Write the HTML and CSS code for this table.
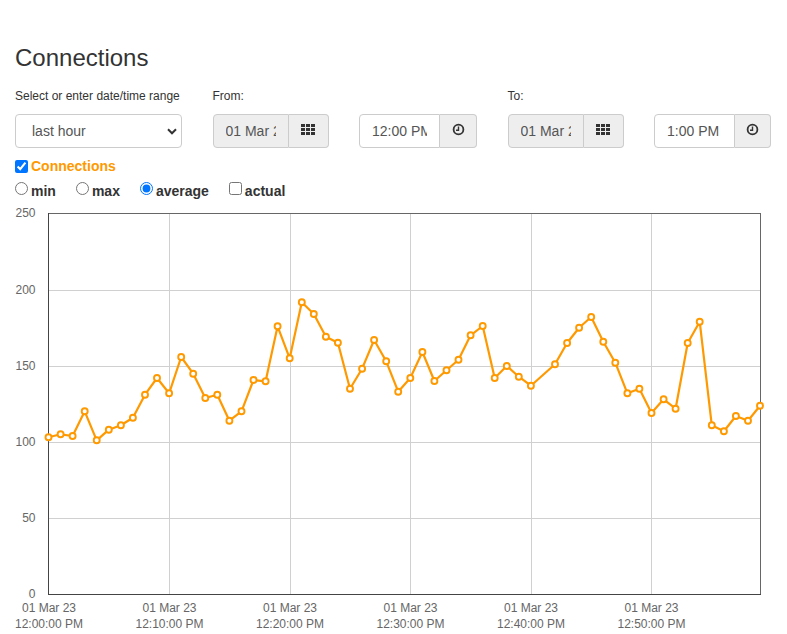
FILE: index.html
```html
<!DOCTYPE html>
<html lang="en">
<head>
<meta charset="utf-8">
<title>Connections</title>
<link rel="stylesheet" href="styles.css">
</head>
<body>
<div class="page">
  <h1 class="title">Connections</h1>
  <div class="controls">
    <div class="field field-range">
      <label class="field-label">Select or enter date/time range</label>
      <div class="select">
        <span>last hour</span>
        <svg class="chevron" width="10" height="7" viewBox="0 0 10 7"><path d="M1 1.3 L5 5.3 L9 1.3" fill="none" stroke="#333" stroke-width="2"/></svg>
      </div>
    </div>
    <div class="field field-date">
      <label class="field-label">From:</label>
      <div class="group">
        <input class="input input-date" value="01 Mar 2023" readonly>
        <span class="addon addon-date">
          <svg width="14" height="11" viewBox="0 0 14 11" fill="#333"><rect x="0" y="0" width="4" height="3"/><rect x="5" y="0" width="4" height="3"/><rect x="10" y="0" width="4" height="3"/><rect x="0" y="4" width="4" height="3"/><rect x="5" y="4" width="4" height="3"/><rect x="10" y="4" width="4" height="3"/><rect x="0" y="8" width="4" height="3"/><rect x="5" y="8" width="4" height="3"/><rect x="10" y="8" width="4" height="3"/></svg>
        </span>
      </div>
    </div>
    <div class="field field-time">
      <label class="field-label">&nbsp;</label>
      <div class="group">
        <input class="input input-time" value="12:00 PM">
        <span class="addon addon-time">
          <svg width="13" height="13" viewBox="0 0 13 13"><circle cx="6.5" cy="6.5" r="4.9" fill="none" stroke="#333" stroke-width="1.8"/><path d="M6.5 3.6 V7.3 H4" fill="none" stroke="#333" stroke-width="1.4"/></svg>
        </span>
      </div>
    </div>
    <div class="field field-date">
      <label class="field-label">To:</label>
      <div class="group">
        <input class="input input-date" value="01 Mar 2023" readonly>
        <span class="addon addon-date">
          <svg width="14" height="11" viewBox="0 0 14 11" fill="#333"><rect x="0" y="0" width="4" height="3"/><rect x="5" y="0" width="4" height="3"/><rect x="10" y="0" width="4" height="3"/><rect x="0" y="4" width="4" height="3"/><rect x="5" y="4" width="4" height="3"/><rect x="10" y="4" width="4" height="3"/><rect x="0" y="8" width="4" height="3"/><rect x="5" y="8" width="4" height="3"/><rect x="10" y="8" width="4" height="3"/></svg>
        </span>
      </div>
    </div>
    <div class="field field-time field-time-end">
      <label class="field-label">&nbsp;</label>
      <div class="group">
        <input class="input input-time" value="1:00 PM">
        <span class="addon addon-time">
          <svg width="13" height="13" viewBox="0 0 13 13"><circle cx="6.5" cy="6.5" r="4.9" fill="none" stroke="#333" stroke-width="1.8"/><path d="M6.5 3.6 V7.3 H4" fill="none" stroke="#333" stroke-width="1.4"/></svg>
        </span>
      </div>
    </div>
  </div>
  <div class="series">
    <label class="series-item"><input class="series-check" type="checkbox" checked><span class="series-name">Connections</span></label>
  </div>
  <div class="modes">
    <label class="mode"><input class="mode-input" type="radio" name="mode"><span>min</span></label>
    <label class="mode"><input class="mode-input" type="radio" name="mode"><span>max</span></label>
    <label class="mode"><input class="mode-input" type="radio" name="mode" checked><span>average</span></label>
    <label class="mode"><input class="mode-input" type="checkbox"><span>actual</span></label>
  </div>
</div>
<svg class="chart" width="787" height="430" viewBox="0 204 787 430">
  <g class="grid" stroke="#d0d0d0" stroke-width="1" fill="none">
    <line x1="48.5" y1="290.5" x2="760.5" y2="290.5"/>
    <line x1="48.5" y1="366.5" x2="760.5" y2="366.5"/>
    <line x1="48.5" y1="442.5" x2="760.5" y2="442.5"/>
    <line x1="48.5" y1="518.5" x2="760.5" y2="518.5"/>
    <line x1="169.5" y1="213.5" x2="169.5" y2="594.5"/>
    <line x1="290.5" y1="213.5" x2="290.5" y2="594.5"/>
    <line x1="410.5" y1="213.5" x2="410.5" y2="594.5"/>
    <line x1="531.5" y1="213.5" x2="531.5" y2="594.5"/>
    <line x1="651.5" y1="213.5" x2="651.5" y2="594.5"/>
  </g>
  <rect x="48.5" y="213.5" width="712" height="381" fill="none" stroke="#666" stroke-width="1"/>
  <line x1="48.5" y1="213" x2="48.5" y2="595" stroke="#444"/>
  <line x1="48" y1="594.5" x2="761" y2="594.5" stroke="#444"/>
  <g class="axis-label" text-anchor="end">
    <text x="35.5" y="217.3">250</text>
    <text x="35.5" y="293.9">200</text>
    <text x="35.5" y="369.8">150</text>
    <text x="35.5" y="445.9">100</text>
    <text x="35.5" y="521.9">50</text>
    <text x="35.5" y="598">0</text>
  </g>
  <g class="axis-label" text-anchor="middle">
    <text x="49" y="611.5">01 Mar 23</text><text x="49" y="628">12:00:00 PM</text>
    <text x="169.5" y="611.5">01 Mar 23</text><text x="169.5" y="628">12:10:00 PM</text>
    <text x="290" y="611.5">01 Mar 23</text><text x="290" y="628">12:20:00 PM</text>
    <text x="410.5" y="611.5">01 Mar 23</text><text x="410.5" y="628">12:30:00 PM</text>
    <text x="531" y="611.5">01 Mar 23</text><text x="531" y="628">12:40:00 PM</text>
    <text x="651.5" y="611.5">01 Mar 23</text><text x="651.5" y="628">12:50:00 PM</text>
  </g>
  <polyline class="series-line" fill="none" stroke="#f90" stroke-width="2.2" stroke-linejoin="round" points="48.5,437.3 60.6,434.3 72.6,436 84.7,411.3 96.7,440.3 108.8,429.7 120.9,425.3 132.9,417.7 145,394.7 157,378 169.1,393.3 181.2,357 193.2,373.7 205.3,398 217.3,394.7 229.4,420.7 241.5,411.3 253.5,380 265.6,381.3 277.6,326.3 289.7,358.3 301.8,302.2 313.8,314 325.9,336.7 337.9,342.7 350,388.7 362.1,368.7 374.1,340 386.2,361.3 398.2,391.7 410.3,378 422.4,352 434.4,381 446.5,370.3 458.5,359.7 470.6,335.3 482.7,326 494.7,378 506.8,366 518.8,376.7 530.9,385.7 555,364.3 567.1,343 579.1,327.7 591.2,317 603.3,341.7 615.3,362.7 627.4,393.3 639.4,388.7 651.5,413 663.6,399.3 675.6,408.7 687.7,343 699.7,321.7 711.8,425.3 723.9,431.3 735.9,416 748,420.7 760,405.7"/>
  <g class="markers" fill="#fff" stroke="#f90" stroke-width="1.9">
    <circle cx="48.5" cy="437.3" r="3"/><circle cx="60.6" cy="434.3" r="3"/><circle cx="72.6" cy="436" r="3"/><circle cx="84.7" cy="411.3" r="3"/><circle cx="96.7" cy="440.3" r="3"/><circle cx="108.8" cy="429.7" r="3"/><circle cx="120.9" cy="425.3" r="3"/><circle cx="132.9" cy="417.7" r="3"/><circle cx="145" cy="394.7" r="3"/><circle cx="157" cy="378" r="3"/>
    <circle cx="169.1" cy="393.3" r="3"/><circle cx="181.2" cy="357" r="3"/><circle cx="193.2" cy="373.7" r="3"/><circle cx="205.3" cy="398" r="3"/><circle cx="217.3" cy="394.7" r="3"/><circle cx="229.4" cy="420.7" r="3"/><circle cx="241.5" cy="411.3" r="3"/><circle cx="253.5" cy="380" r="3"/><circle cx="265.6" cy="381.3" r="3"/><circle cx="277.6" cy="326.3" r="3"/>
    <circle cx="289.7" cy="358.3" r="3"/><circle cx="301.8" cy="302.2" r="3"/><circle cx="313.8" cy="314" r="3"/><circle cx="325.9" cy="336.7" r="3"/><circle cx="337.9" cy="342.7" r="3"/><circle cx="350" cy="388.7" r="3"/><circle cx="362.1" cy="368.7" r="3"/><circle cx="374.1" cy="340" r="3"/><circle cx="386.2" cy="361.3" r="3"/><circle cx="398.2" cy="391.7" r="3"/>
    <circle cx="410.3" cy="378" r="3"/><circle cx="422.4" cy="352" r="3"/><circle cx="434.4" cy="381" r="3"/><circle cx="446.5" cy="370.3" r="3"/><circle cx="458.5" cy="359.7" r="3"/><circle cx="470.6" cy="335.3" r="3"/><circle cx="482.7" cy="326" r="3"/><circle cx="494.7" cy="378" r="3"/><circle cx="506.8" cy="366" r="3"/><circle cx="518.8" cy="376.7" r="3"/>
    <circle cx="530.9" cy="385.7" r="3"/><circle cx="555" cy="364.3" r="3"/><circle cx="567.1" cy="343" r="3"/><circle cx="579.1" cy="327.7" r="3"/><circle cx="591.2" cy="317" r="3"/><circle cx="603.3" cy="341.7" r="3"/><circle cx="615.3" cy="362.7" r="3"/><circle cx="627.4" cy="393.3" r="3"/><circle cx="639.4" cy="388.7" r="3"/>
    <circle cx="651.5" cy="413" r="3"/><circle cx="663.6" cy="399.3" r="3"/><circle cx="675.6" cy="408.7" r="3"/><circle cx="687.7" cy="343" r="3"/><circle cx="699.7" cy="321.7" r="3"/><circle cx="711.8" cy="425.3" r="3"/><circle cx="723.9" cy="431.3" r="3"/><circle cx="735.9" cy="416" r="3"/><circle cx="748" cy="420.7" r="3"/><circle cx="760" cy="405.7" r="3"/>
  </g>
</svg>
</body>
</html>
```

FILE: styles.css
```css
html, body {
  margin: 0;
  padding: 0;
  background: #fff;
  overflow: hidden;
}

body {
  font-family: "Liberation Sans", Arial, Helvetica, sans-serif;
  color: #333;
  font-size: 14px;
}

.page {
  padding: 45px 15px 0;
}

.title {
  margin: 0 0 17px;
  font-size: 24px;
  line-height: 26px;
  font-weight: 400;
  color: #333;
}

.controls {
  display: flex;
  gap: 30.5px;
}

.field-label {
  display: block;
  font-size: 12px;
  line-height: 17px;
  margin-bottom: 9px;
  color: #333;
}

.field-range { width: 167px; }
.field-date { width: 116px; }
.field-time { width: 118px; }
.field-time-end { width: 117px; }

.select {
  box-sizing: border-box;
  height: 34px;
  border: 1px solid #ccc;
  border-radius: 4px;
  background: #fff;
  display: flex;
  align-items: center;
  justify-content: space-between;
  padding: 0 4px 0 16px;
  font-size: 14px;
  color: #555;
}

.chevron {
  display: block;
  margin-top: 1px;
}

.group {
  display: flex;
  height: 34px;
}

.input {
  box-sizing: border-box;
  height: 34px;
  margin: 0;
  padding: 6px 12px;
  border: 1px solid #ccc;
  border-radius: 4px 0 0 4px;
  font-family: inherit;
  font-size: 14px;
  color: #555;
  background: #fff;
  outline: none;
  min-width: 0;
}

.input-date {
  width: 76px;
  background: #eee;
}

.input-time {
  width: 81px;
}

.addon {
  box-sizing: border-box;
  height: 34px;
  border: 1px solid #ccc;
  border-left: 0;
  border-radius: 0 4px 4px 0;
  background: #eee;
  display: flex;
  align-items: center;
  justify-content: center;
  padding-bottom: 3px;
}

.addon-date { width: 40px; }
.addon-time { width: 37px; }
.field-time-end .addon-time { width: 36px; }

.addon svg { display: block; }

.series {
  margin-top: 8px;
  height: 20px;
}

.series-item {
  display: flex;
  align-items: flex-start;
  line-height: 20px;
  font-weight: 700;
  font-size: 14px;
}

.series-check {
  margin: 4px 3px 0 0;
  width: 13px;
  height: 13px;
}

.series-name {
  color: #f90;
}

.modes {
  margin-top: 5px;
  height: 20px;
  display: flex;
  gap: 20px;
}

.mode {
  display: flex;
  align-items: flex-start;
  line-height: 20px;
  font-weight: 700;
  font-size: 14px;
  color: #333;
}

.mode-input {
  margin: 1px 3px 0 0;
  width: 13px;
  height: 13px;
}

.chart {
  display: block;
  margin-top: 3px;
}

.axis-label {
  font-family: "Liberation Sans", Arial, sans-serif;
  font-size: 12px;
  fill: #666;
}
```
